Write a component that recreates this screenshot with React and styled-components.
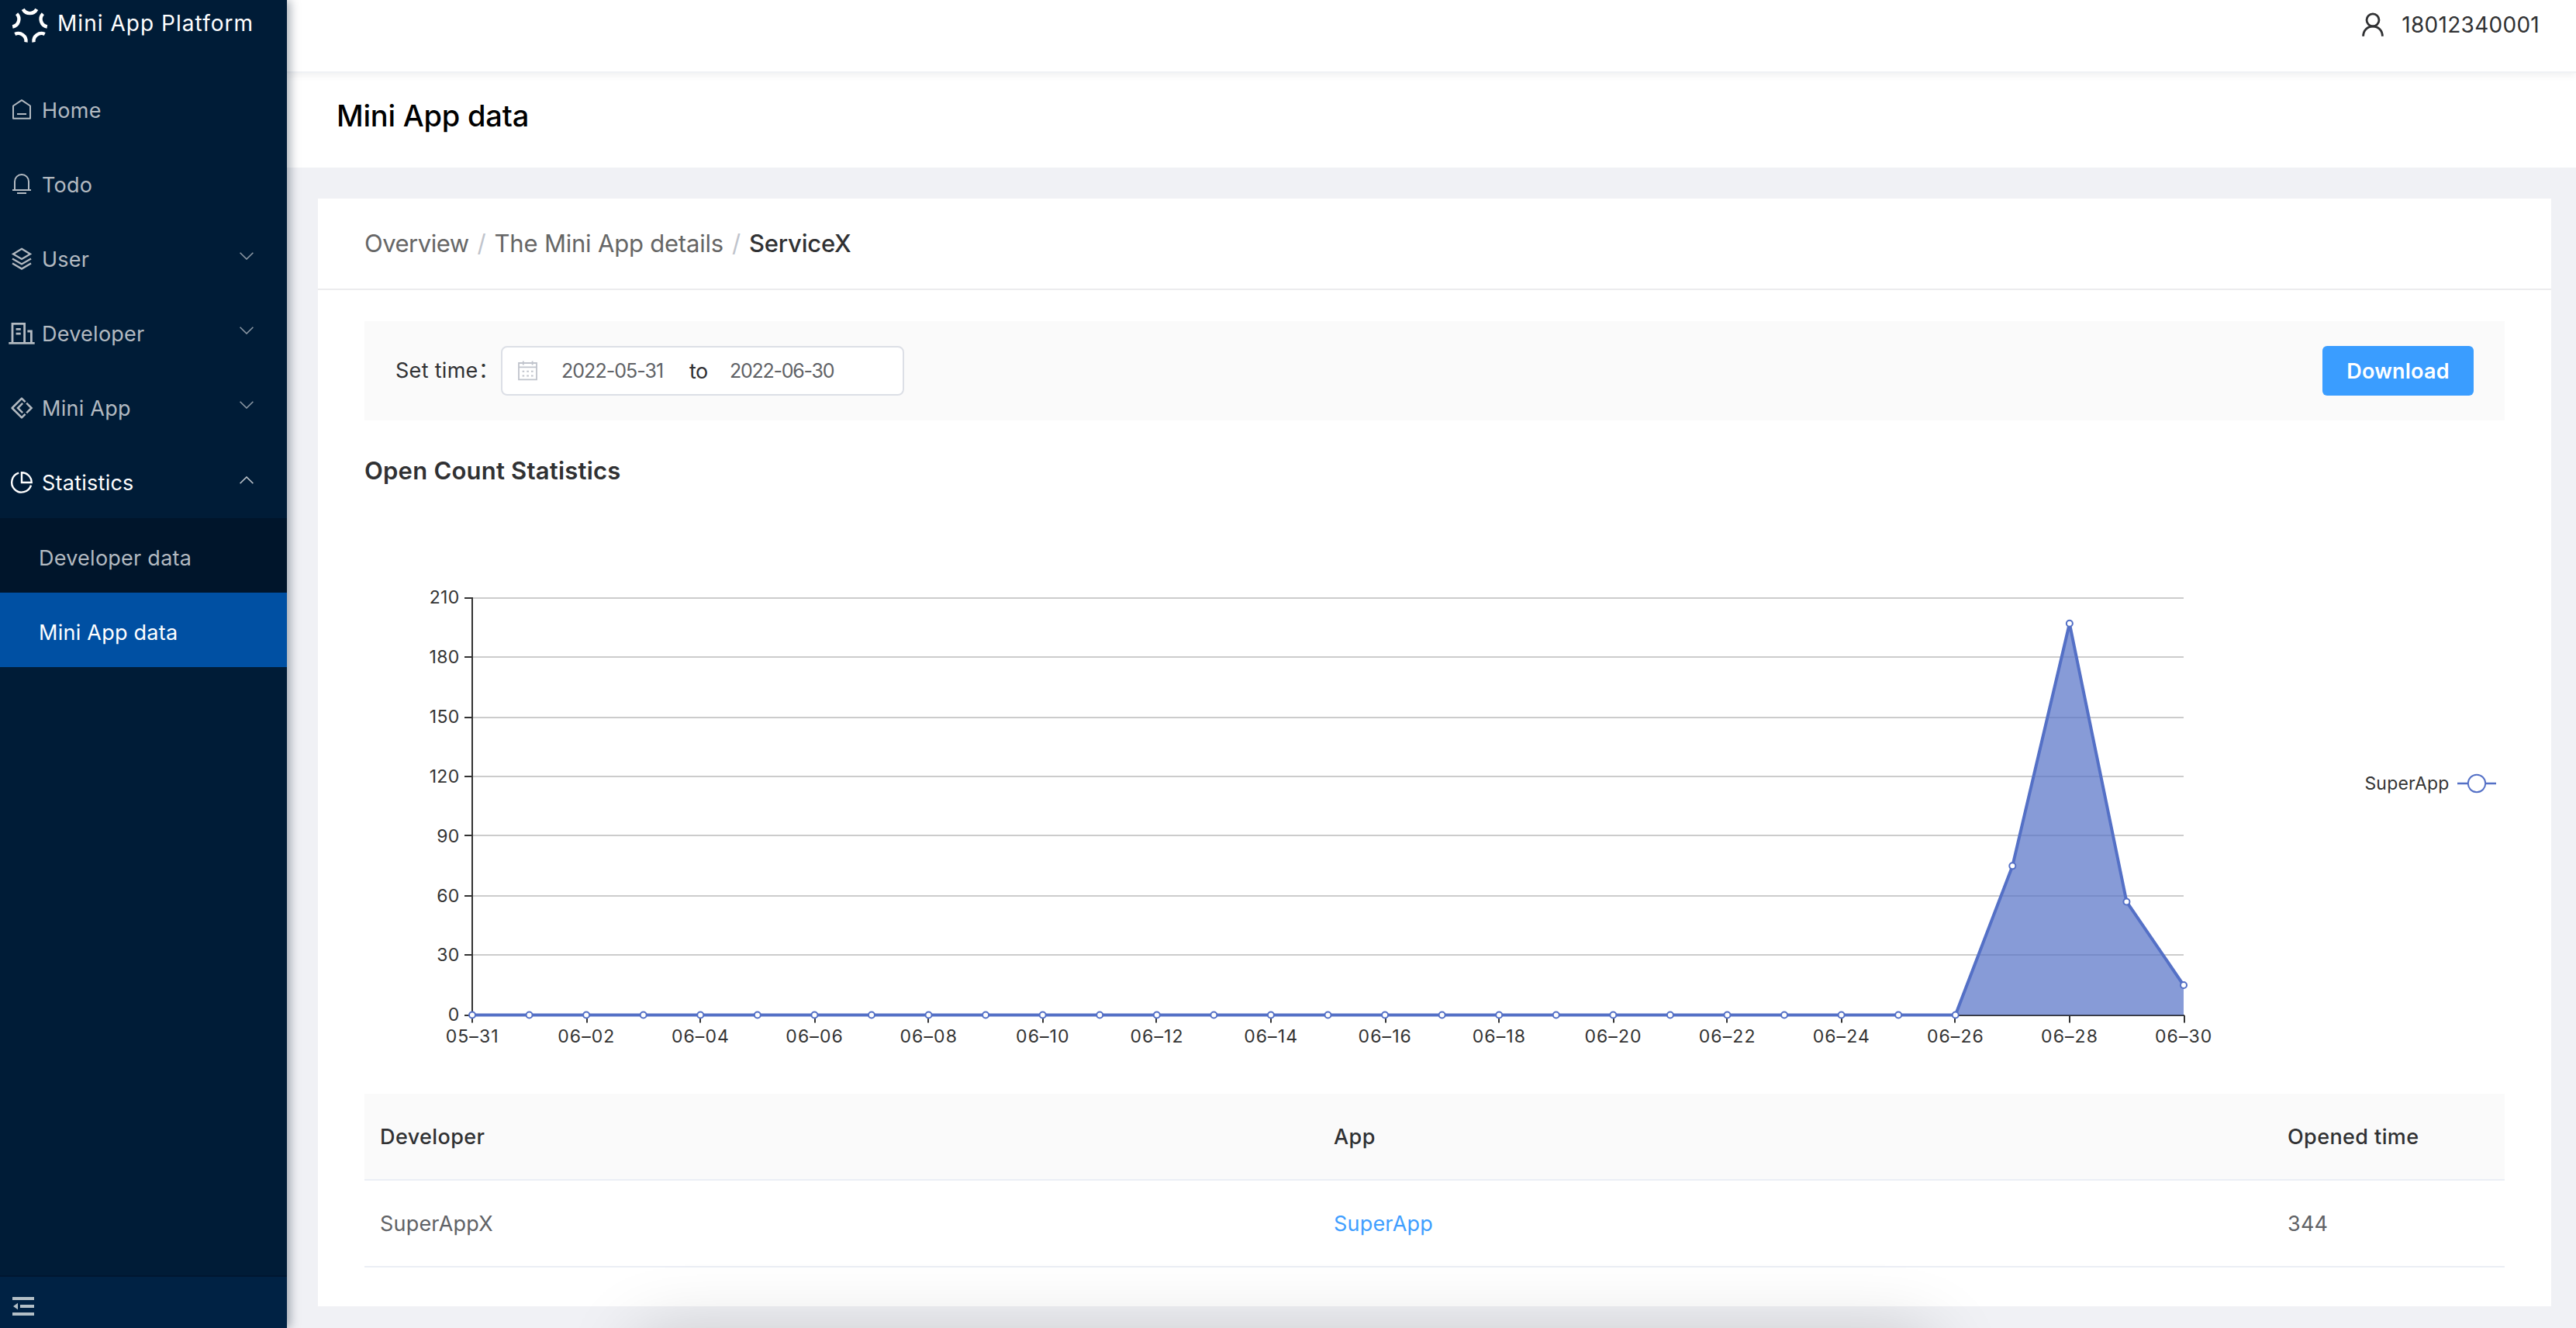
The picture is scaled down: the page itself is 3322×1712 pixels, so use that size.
import styled, { createGlobalStyle } from "styled-components";

const GlobalStyle = createGlobalStyle`
    *{
        box-sizing:border-box;
    }
    body{
        margin:0;
        background:#f0f1f5;
        color:#303133;
        font-family:Inter,"Noto Sans CJK SC",sans-serif;
        font-size:27px;
        line-height:1.2;
        overflow:hidden;
    }
`;

const Layout=styled.div`
    display:flex;
    height:1712px;
`;

const Sidebar=styled.aside`
    position:relative;
    z-index:1;
    display:flex;
    flex-direction:column;
    width:370px;
    flex-shrink:0;
    background:#001c37;
    box-shadow:4px 0 12px rgba(0,21,41,0.35);
`;

const Brand=styled.div`
    display:flex;
    align-items:center;
    height:92px;
    padding:0 0 28px 14px;
    color:#fff;
`;

const BrandName=styled.span`
    margin:-3px 0 0 11px;
    font-size:28px;
    letter-spacing:1.04px;
    white-space:nowrap;
`;

const Menu=styled.nav`
    flex:1;
`;

const MenuItem=styled.div`
    display:flex;
    align-items:center;
    height:96px;
    padding:0 43px 0 10px;
    color:${({$open})=>$open ? "#fff" : "#b3bac1"};
    letter-spacing:0.25px;
`;

const MenuIcon=styled.svg`
    width:36px;
    height:36px;
    margin-top:2px;
    fill:none;
    stroke:currentColor;
    stroke-width:${({$weight})=>$weight || 2}px;
`;

const MenuLabel=styled.span`
    flex:1;
    padding:7px 0 0 8px;
`;

const Arrow=styled.svg`
    width:18px;
    height:10px;
    margin-top:${({$open})=>$open ? "-3px" : "-5px"};
    fill:none;
    stroke:#fff;
    stroke-opacity:${({$open})=>$open ? 0.75 : 0.55};
    stroke-width:1.6px;
`;

const SubMenu=styled.div`
    background:#00152b;
`;

const SubItem=styled.div`
    display:flex;
    align-items:center;
    height:96px;
    padding:9px 0 0 50px;
    background:${({$active})=>$active ? "#0050a3" : "transparent"};
    color:${({$active})=>$active ? "#fff" : "#b3bac1"};
    letter-spacing:0.25px;
`;

const Collapse=styled.div`
    display:flex;
    align-items:center;
    height:68px;
    padding:10px 0 0 16px;
    border-top:2px solid #001730;
    background:#002244;
`;

const Main=styled.div`
    flex:1;
    display:flex;
    flex-direction:column;
    min-width:0;
`;

const Header=styled.header`
    position:relative;
    display:flex;
    justify-content:flex-end;
    align-items:center;
    height:94px;
    padding:0 47px 28px 0;
    background:#fff;
    border-bottom:2px solid #f0f2f5;
    box-shadow:0 2px 10px rgba(0,21,41,0.08);
`;

const Phone=styled.span`
    margin:1px 0 0 22px;
    font-size:28px;
    letter-spacing:0.28px;
`;

const PageHead=styled.div`
    display:flex;
    align-items:center;
    height:122px;
    padding:0 0 10px 64px;
    background:#fff;
`;

const PageTitle=styled.h1`
    margin:0;
    color:#000;
    font-size:38px;
    font-weight:500;
    letter-spacing:-0.2px;
`;

const Card=styled.section`
    margin:40px 32px 0 40px;
    height:1428px;
    background:#fff;
`;

const Breadcrumb=styled.div`
    display:flex;
    align-items:center;
    height:118px;
    padding-left:60px;
    border-bottom:2px solid #ececee;
    font-size:31px;
    letter-spacing:-0.25px;
    color:#666;
`;

const Crumb=styled.span`
    color:${({$current})=>$current ? "#303133" : "#666"};
    font-weight:${({$current})=>$current ? 500 : 400};
    letter-spacing:${({$tight})=>$tight ? "-0.5px" : "-0.2px"};
`;

const Slash=styled.span`
    width:33px;
    text-align:center;
    color:#c0c4cc;
`;

const CardBody=styled.div`
    padding:40px 60px 0;
`;

const FilterBar=styled.div`
    display:flex;
    align-items:center;
    height:128px;
    padding:0 40px;
    background:#fafafa;
`;

const FilterLabel=styled.span`
    width:136px;
    letter-spacing:0.3px;
    white-space:nowrap;
`;

const DateRange=styled.div`
    display:flex;
    align-items:center;
    width:520px;
    height:64px;
    padding-left:20px;
    border:2px solid #dcdfe6;
    border-radius:8px;
    background:#fff;
`;

const DateValue=styled.span`
    width:165px;
    color:#606266;
    font-size:25px;
    letter-spacing:${({$tight})=>$tight ? "-1.25px" : "-0.95px"};
`;

const DateTo=styled.span`
    width:52px;
    padding-top:2px;
    letter-spacing:-0.6px;
`;

const DownloadButton=styled.button`
    margin-left:auto;
    width:195px;
    height:64px;
    border:0;
    border-radius:6px;
    background:#3a9dff;
    color:#fff;
    font:600 27px Inter,sans-serif;
    letter-spacing:0.2px;
`;

const SectionTitle=styled.h2`
    display:flex;
    align-items:center;
    height:130px;
    margin:0;
    font-size:31px;
    font-weight:600;
    letter-spacing:0.22px;
`;

const Chart=styled.svg`
    display:block;
    width:2760px;
    height:738px;
`;

const AxisText=styled.text`
    fill:#333;
    font-size:23px;
    letter-spacing:${({$spacing})=>$spacing}px;
`;

const TableRow=styled.div`
    display:grid;
    grid-template-columns:1230px 1230px 1fr;
    align-items:center;
    height:112px;
    padding-top:2px;
    border-bottom:2px solid #ebeef5;
    background:${({$head})=>$head ? "#fafafa" : "#fff"};
    color:${({$head})=>$head ? "#303133" : "#606266"};
    font-weight:${({$head})=>$head ? 500 : 400};
    letter-spacing:${({$head})=>$head ? 0.4 : 0.2}px;
`;

const Cell=styled.div`
    padding-left:20px;
    color:${({$link})=>$link ? "#409eff" : "inherit"};
`;

/* sits just below the window, only its shadow reaches in */
const DockShadow=styled.div`
    position:fixed;
    z-index:2;
    left:825px;
    top:1724px;
    width:1665px;
    height:300px;
    box-shadow:0 0 90px rgba(0,0,0,0.2);
    pointer-events:none;
`;

const HomeIcon=()=>(
    <MenuIcon viewBox="0 0 36 36">
        <path d="M7 13.5 18 6.2l11 7.3v16.2H7z" strokeLinejoin="round" />
        <path d="M12 24h12" />
    </MenuIcon>
);

const TodoIcon=()=>(
    <MenuIcon viewBox="0 0 36 36">
        <path d="M9 26V15a9 9 0 0 1 18 0v11M6 26h24M12 30h12" />
    </MenuIcon>
);

const UserIcon=()=>(
    <MenuIcon viewBox="0 0 36 36" $weight={2.3}>
        <path d="M18 5.8 29 12.4 18 19 7 12.4z" />
        <path d="M6 18.4 18 25.4l12-7M6 24.6l12 7 12-7" />
    </MenuIcon>
);

const DeveloperIcon=()=>(
    <MenuIcon viewBox="0 0 36 36" $weight={2.8}>
        <path d="M6 31V6.4h15.6V31M1.3 31.3h33.4M25.4 16h5V31" />
        <path d="M10.6 13.4h6.2M10.6 19.2h6.2" />
    </MenuIcon>
);

const MiniAppIcon=()=>(
    <MenuIcon viewBox="0 0 36 36" $weight={2.5}>
        <path d="M22.6 11.2 18 6.6 5.6 19 18 31.4l4.6-4.6" strokeLinejoin="round" />
        <path d="M19.2 12.8 13 19l6.2 6.2M24.2 12.6l6.4 6.4-6.4 6.4" />
    </MenuIcon>
);

const StatisticsIcon=()=>(
    <MenuIcon viewBox="0 0 36 36" $weight={2.4}>
        <path d="M14.2 6.7A12.7 12.7 0 1 0 30 22.6" />
        <path d="M18 6.3V19h12.7A12.7 12.7 0 0 0 18 6.3z" />
    </MenuIcon>
);

const menu=[
    {label:"Home",Icon:HomeIcon},
    {label:"Todo",Icon:TodoIcon},
    {label:"User",Icon:UserIcon,arrow:true},
    {label:"Developer",Icon:DeveloperIcon,arrow:true},
    {label:"Mini App",Icon:MiniAppIcon,arrow:true},
    {label:"Statistics",Icon:StatisticsIcon,arrow:true,open:true},
];

function Logo(){
    return <svg width="49" height="49" viewBox="-24.5 -24.5 49 49" fill="none" stroke="#fff" strokeWidth="4.4">
        {[0,72,144,216,288].map((deg)=>(
            <path key={deg} transform={`rotate(${deg})`} d="M-8.8 -20.6A10 10 0 0 0 8.8 -20.6" />
        ))}
    </svg>;
}

function CalendarIcon(){
    return <svg width="56" height="28" viewBox="0 0 56 28" fill="none" stroke="#c0c4cc" strokeWidth="1.8">
        <path d="M1 4h23v21.4H1zM1 9.4h23M6.8 1.4v5M18.6 1.4v5" />
        <path d="M5.6 14.8h14M5.6 20.4h14" strokeWidth="2" strokeDasharray="2.6 3.1" />
    </svg>;
}

/* counts per day, 05-31 to 06-30 */
const counts=[...Array(27).fill(0),75,197,57,15];
const yTicks=[210,180,150,120,90,60,30,0];
const left=139;
const bottom=636.5;
const stepX=2207/30;
const stepY=538/210;

const day=(i)=>(i===0 ? "05–31" : `06–${String(i).padStart(2,"0")}`);
const px=(i)=>left+i*stepX;
const py=(v)=>bottom-v*stepY;
const snap=(v)=>Math.round((v-1)/2)*2+1;

function OpenCountChart(){
    const points=counts.map((v,i)=>`${px(i)},${py(v)}`).join(" ");
    return <Chart viewBox="0 0 2760 738">
        {yTicks.map((t)=>(
            <g key={t}>
                <path d={`M${left} ${snap(py(t))}H${px(30)}`} stroke="#ccc" strokeWidth="2" />
                <path d={`M${left-10} ${snap(py(t))}h10`} stroke="#333" strokeWidth="2" />
                <AxisText x={left-16.5} y={py(t)+7.8} textAnchor="end" $spacing={0.3}>{t}</AxisText>
            </g>
        ))}
        <path d={`M${left} 98V637M${left-1} 637H${px(30)+1}`} stroke="#333" strokeWidth="2" />
        {counts.map((v,i)=>i%2===0 && (
            <g key={i}>
                <path d={`M${snap(px(i))} 637v9.5`} stroke="#333" strokeWidth="2" />
                <AxisText x={px(i)+0.2} y={672.4} textAnchor="middle" $spacing={1.1}>{day(i)}</AxisText>
            </g>
        ))}
        <polygon points={`${left},${bottom} ${points} ${px(30)},${bottom}`} fill="#5470c6" fillOpacity="0.7" />
        <polyline points={points} fill="none" stroke="#5470c6" strokeWidth="4" strokeLinejoin="bevel" />
        {counts.map((v,i)=>(
            <circle key={i} cx={px(i)} cy={py(v)} r="4" fill="#fff" stroke="#5470c6" strokeWidth="2" />
        ))}
        <AxisText x={2579.4} y={346} $spacing={0.2}>SuperApp</AxisText>
        <path d="M2699 338h50" stroke="#5470c6" strokeWidth="2.4" />
        <circle cx="2724" cy="338" r="11.2" fill="#fff" stroke="#5470c6" strokeWidth="2" />
    </Chart>;
}

function App(){
    return <Layout>
        <GlobalStyle />
        <Sidebar>
            <Brand>
                <Logo />
                <BrandName>Mini App Platform</BrandName>
            </Brand>
            <Menu>
                {menu.map(({label,Icon,arrow,open})=>(
                    <MenuItem key={label} $open={open}>
                        <Icon />
                        <MenuLabel>{label}</MenuLabel>
                        {arrow && <Arrow viewBox="0 0 18 10" $open={open}>
                            <path d={open ? "M.6 9.2 9 1l8.4 8.2" : "M.6.8 9 9 17.4.8"} />
                        </Arrow>}
                    </MenuItem>
                ))}
                <SubMenu>
                    <SubItem>Developer data</SubItem>
                    <SubItem $active>Mini App data</SubItem>
                </SubMenu>
            </Menu>
            <Collapse>
                <svg width="28" height="24" viewBox="0 0 28 24" fill="#b3bfc6">
                    <path d="M0 0h28v4H0zM10 10h18v4H10zM0 20h28v4H0zM1 12l6-4.2v8.4z" />
                </svg>
            </Collapse>
        </Sidebar>
        <Main>
            <Header>
                <svg width="30" height="32" viewBox="0 0 30 32" fill="none" stroke="#303133" strokeWidth="2.8">
                    <circle cx="15" cy="9.8" r="8" />
                    <path d="M2.6 30.8C2.6 23 8.2 18 15 18s12.4 5 12.4 12.8" />
                </svg>
                <Phone>18012340001</Phone>
            </Header>
            <PageHead>
                <PageTitle>Mini App data</PageTitle>
            </PageHead>
            <Card>
                <Breadcrumb>
                    <Crumb $tight>Overview</Crumb>
                    <Slash>/</Slash>
                    <Crumb>The Mini App details</Crumb>
                    <Slash>/</Slash>
                    <Crumb $current>ServiceX</Crumb>
                </Breadcrumb>
                <CardBody>
                    <FilterBar>
                        <FilterLabel>Set time：</FilterLabel>
                        <DateRange>
                            <CalendarIcon />
                            <DateValue>2022-05-31</DateValue>
                            <DateTo>to</DateTo>
                            <DateValue $tight>2022-06-30</DateValue>
                        </DateRange>
                        <DownloadButton>Download</DownloadButton>
                    </FilterBar>
                    <SectionTitle>Open Count Statistics</SectionTitle>
                    <OpenCountChart />
                    <TableRow $head>
                        <Cell>Developer</Cell>
                        <Cell>App</Cell>
                        <Cell>Opened time</Cell>
                    </TableRow>
                    <TableRow>
                        <Cell>SuperAppX</Cell>
                        <Cell $link>SuperApp</Cell>
                        <Cell>344</Cell>
                    </TableRow>
                </CardBody>
            </Card>
        </Main>
        <DockShadow />
    </Layout>;
}

export default App;
